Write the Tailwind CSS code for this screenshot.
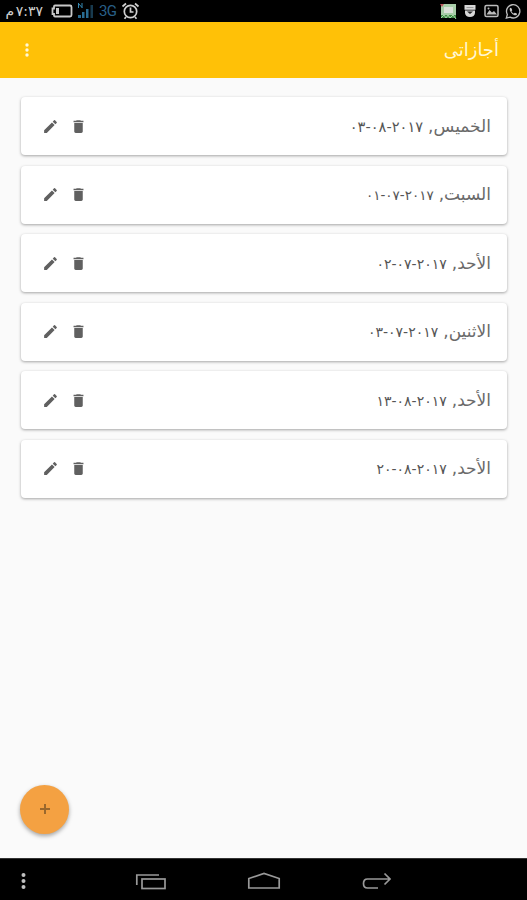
<!DOCTYPE html>
<html lang="ar">
<head>
<meta charset="utf-8">
<title>أجازاتى</title>
<script src="https://cdn.jsdelivr.net/npm/@tailwindcss/browser@4"></script>
</head>
<body class="bg-[#fafafa] font-['DejaVu_Sans',sans-serif]">
<svg class="hidden">
  <symbol id="edit" viewBox="0 0 24 24"><path d="M3 17.25V21h3.75L17.81 9.94l-3.75-3.75L3 17.25zM20.71 7.04a1 1 0 0 0 0-1.41l-2.34-2.34a1 1 0 0 0-1.41 0l-1.83 1.83 3.75 3.75 1.83-1.83z"/></symbol>
  <symbol id="trash" viewBox="0 0 24 24"><path d="M6 19c0 1.1.9 2 2 2h8c1.1 0 2-.9 2-2V7H6v12zM19 4h-3.500l-1-1h-5l-1 1H5v2h14V4z"/></symbol>
</svg>
<div class="flex h-[900px] w-[527px] flex-col overflow-hidden">
  <header class="flex h-[22px] shrink-0 items-center justify-between bg-black pr-[6px] pl-[5px]">
    <div class="flex items-center">
      <span dir="rtl" class="w-[38px] text-[14px] leading-[20px] [word-spacing:-3px] whitespace-nowrap text-[#d0d0d0]">٧:٣٧ م</span>
      <svg class="ml-[8px] h-[14px] w-[22px]" viewBox="0 0 22 14" fill="none" stroke="#c8c8c8" stroke-width="1.800"><path d="M4 1.500h15q1.500 0 1.500 1.500v8q0 1.500-1.500 1.500H4q-1 0-1-1V10H1.500V4.500H3V2.500q0-1 1-1z"/><path d="M6.500 4v6" stroke-width="3"/></svg>
      <svg class="ml-[4px] h-[18px] w-[18px]" viewBox="0 0 18 18" fill="#286b91"><path d="M1 13h3v3H1zM5 10h2.500v6H5zM9 7h2.500v9H9z"/><path d="M13.500 3H16v13h-2.500z" fill="#183a4e"/><path d="M1.500 6V1M5 6V1M1.500 1.500 5 5.500" stroke="#3587b0" fill="none"/></svg>
      <span class="ml-[4px] w-[19px] font-['Roboto',sans-serif] text-[15px] leading-[20px] tracking-[-0.7px] text-[#285f87]">3G</span>
      <svg class="ml-[3px] h-[18px] w-[19px]" viewBox="0 0 19 18" fill="none" stroke="#d0d0d0" stroke-width="1.700"><circle cx="9.500" cy="9.500" r="6.200"/><path d="M1.500 4.500 5 1.500M17.500 4.500 14 1.500M9.500 5.500V10l3 0M5 15l-1.500 1.800M14 15l1.500 1.800"/></svg>
    </div>
    <div class="flex items-center gap-[6px]">
      <svg class="h-[17px] w-[17px]" viewBox="0 0 17 17"><path d="M1 1h15v14H1z" fill="#a8cda8"/><path d="M4 4h9v6H4z" fill="#dae0d8"/><path d="M1 12h15v3H1z" fill="#408c46"/><path d="M1 15l3-3 2 3 2-3 2 3 3-3 3 4" stroke="#a9d5a9" fill="none"/><path d="M0 1h4L2 4z" fill="#bf5960"/></svg>
      <svg class="h-[16px] w-[14px]" viewBox="0 0 14 16"><path d="M1.500 2h11v4.700h-11zM2 7.500h10v2.500q-.5 4-5 4T2 10z" fill="#d8d8d8"/><path d="M4 8.500h6L7 11z" fill="#222"/><path d="M3.500 4.500h7" stroke="#999"/></svg>
      <svg class="ml-[1px] h-[14px] w-[15px]" viewBox="0 0 15 14"><rect x="1" y="1.500" width="13" height="11" rx="1.500" fill="none" stroke="#bcbcbc" stroke-width="1.500"/><path d="M2.500 10.500 5.500 6l2.500 2.500L10 7l3 3.500z" fill="#bcbcbc"/><circle cx="4.500" cy="4.500" r="1" fill="#bcbcbc"/></svg>
      <svg class="h-[17px] w-[16px]" viewBox="0 0 24 24"><path d="M2 22l1.500-5.500A10 10 0 1 1 7.500 20.500z" fill="none" stroke="#bcbcbc" stroke-width="2"/><path d="M8 6.500c-2 1.500-1 5 2 8s6 4.500 8 2l-.3-1.500-3-1.200-1.400 1.300c-1.800-.6-3-2-3.600-3.400l1.200-1.500L9.700 7z" fill="#c8c8c8"/></svg>
    </div>
  </header>
  <div class="flex h-[56px] shrink-0 items-center justify-between bg-[#ffc107] pr-[28px] pl-[24px]">
    <svg class="h-[16px] w-[6px]" viewBox="0 0 6 16" fill="#fff8d8"><circle cx="3" cy="3" r="1.700"/><circle cx="3" cy="8" r="1.700"/><circle cx="3" cy="13" r="1.700"/></svg>
    <h1 dir="rtl" class="text-[18px] leading-[24px] text-[#fff7d5]">أجازاتى</h1>
  </div>
  <main id="list" class="flex flex-1 flex-col gap-[10.600px] pt-[19px] pr-[20px] pl-[21px]"></main>
  <div class="flex h-[73.500px] shrink-0 items-start pl-[20px]">
    <button class="flex size-[49px] items-center justify-center rounded-full bg-[#f4a142] shadow-[0_2px_4px_rgba(0,0,0,0.35)]">
      <svg class="size-[12px]" viewBox="0 0 12 12" stroke="#9a682d" stroke-width="2"><path d="M6 1v10M1 6h10"/></svg>
    </button>
  </div>
  <nav class="flex h-[42px] shrink-0 items-center border-t border-[#333] bg-black pt-[3px] pl-[20px]">
    <svg class="h-[18px] w-[7px]" viewBox="0 0 7 18" fill="#c0c0c0"><circle cx="3.500" cy="3" r="2"/><circle cx="3.500" cy="9" r="2"/><circle cx="3.500" cy="15" r="2"/></svg>
    <svg class="ml-[108px] h-[17px] w-[32px]" viewBox="0 0 32 17" fill="none" stroke="#999" stroke-width="1.700"><path d="M1.800 12V2H24"/><rect x="7" y="6" width="23" height="9.500"/></svg>
    <svg class="ml-[80px] h-[18px] w-[34px]" viewBox="0 0 34 18" fill="none" stroke="#999" stroke-width="1.700"><path d="M1.800 16V6.500L17 1.500l15.200 5V16z"/></svg>
    <svg class="ml-[81px] h-[18px] w-[29px]" viewBox="0 0 29 18" fill="none" stroke="#999" stroke-width="1.700"><path d="M16 16H5.500Q1.500 16 1.500 11.500T5.500 7H28M22.500 1.500 28 7l-5.500 5.500"/></svg>
  </nav>
</div>
<script>
  const holidays = [
    ['الخميس', '٢٠١٧-٠٨-٠٣', 14.6],
    ['السبت', '٢٠١٧-٠٧-٠١', 13.5],
    ['الأحد', '٢٠١٧-٠٧-٠٢', 14],
    ['الاثنين', '٢٠١٧-٠٧-٠٣', 14],
    ['الأحد', '٢٠١٧-٠٨-١٣', 14],
    ['الأحد', '٢٠١٧-٠٨-٢٠', 14]
  ];
  document.getElementById('list').innerHTML = holidays.map(([day, date, size]) => `
    <article class="flex h-[58px] shrink-0 items-center justify-between rounded-[4px] bg-white pr-[16px] pl-[21px] shadow-[0_1px_3px_rgba(0,0,0,0.35)]">
      <div class="flex gap-[11px] text-[#606060]">
        <svg class="size-[17px]" fill="currentColor"><use href="#edit"/></svg>
        <svg class="size-[17px]" fill="currentColor"><use href="#trash"/></svg>
      </div>
      <p dir="rtl" class="flex items-baseline gap-[5px] text-[17px] leading-[24px] whitespace-nowrap text-[#6a6a6a]"><span>${day},</span><span class="text-[#555]" style="font-size:${size}px">${date}</span></p>
    </article>`).join('');
</script>
</body>
</html>
